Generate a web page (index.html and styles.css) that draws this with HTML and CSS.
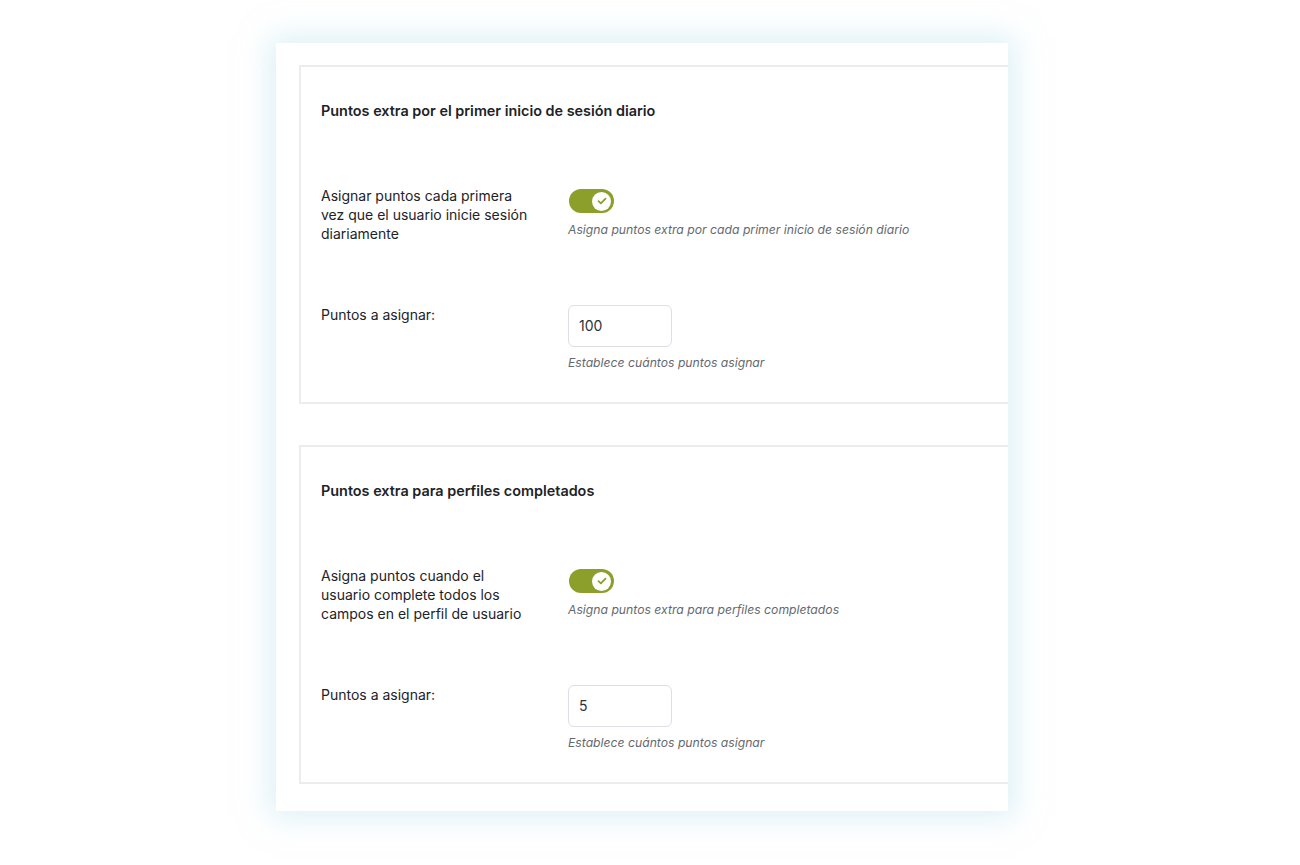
FILE: index.html
```html
<!DOCTYPE html>
<html lang="es">
<head>
<meta charset="utf-8">
<title>Puntos extra</title>
<link rel="stylesheet" href="styles.css">
</head>
<body>
<div class="stage">
  <div class="card">
    <section class="panel">
      <h2 class="panel-title">Puntos extra por el primer inicio de sesión diario</h2>
      <div class="row row-toggle">
        <div class="label">Asignar puntos cada primera vez que el usuario inicie sesión diariamente</div>
        <div class="field">
          <span class="toggle">
            <span class="knob">
              <svg width="10" height="8" viewBox="0 0 10 8"><path d="M1.5 4.2 L3.9 6.4 L8.5 1.6" fill="none" stroke="#8c9f2b" stroke-width="1.8" stroke-linecap="round" stroke-linejoin="round"/></svg>
            </span>
          </span>
          <p class="desc">Asigna puntos extra por cada primer inicio de sesión diario</p>
        </div>
      </div>
      <div class="row row-input">
        <div class="label">Puntos a asignar:</div>
        <div class="field">
          <div class="input">100</div>
          <p class="desc">Establece cuántos puntos asignar</p>
        </div>
      </div>
    </section>
    <section class="panel">
      <h2 class="panel-title">Puntos extra para perfiles completados</h2>
      <div class="row row-toggle">
        <div class="label">Asigna puntos cuando el usuario complete todos los campos en el perfil de usuario</div>
        <div class="field">
          <span class="toggle">
            <span class="knob">
              <svg width="10" height="8" viewBox="0 0 10 8"><path d="M1.5 4.2 L3.9 6.4 L8.5 1.6" fill="none" stroke="#8c9f2b" stroke-width="1.8" stroke-linecap="round" stroke-linejoin="round"/></svg>
            </span>
          </span>
          <p class="desc">Asigna puntos extra para perfiles completados</p>
        </div>
      </div>
      <div class="row row-input">
        <div class="label">Puntos a asignar:</div>
        <div class="field">
          <div class="input">5</div>
          <p class="desc">Establece cuántos puntos asignar</p>
        </div>
      </div>
    </section>
  </div>
</div>
</body>
</html>
```

FILE: styles.css
```css
* { box-sizing: border-box; }
html, body {
  margin: 0;
  padding: 0;
  background: #ffffff;
  width: 1300px;
  height: 865px;
  overflow: hidden;
}
body {
  font-family: Inter, "Noto Sans", "Liberation Sans", sans-serif;
  color: #1d2327;
}
.stage {
  padding-top: 43px;
  padding-left: 276px;
}
.card {
  width: 732px;
  height: 768px;
  background: #ffffff;
  box-shadow: 0 0 28px 6px rgba(190, 228, 240, 0.55);
  padding: 22px 0 0 23px;
  overflow: hidden;
}
.panel {
  width: 760px;
  height: 339px;
  border: 2px solid #ececec;
  border-right: none;
  padding: 34px 0 0 20px;
  margin-bottom: 41px;
}
.panel-title {
  margin: 0;
  font-size: 14.4px;
  line-height: 20px;
  font-weight: 600;
  color: #1d2327;
}
.row {
  display: flex;
  gap: 38px;
}
.row-toggle { margin-top: 65px; }
.row-input { margin-top: 62px; }
.label {
  width: 209px;
  font-size: 14px;
  line-height: 19px;
  color: #1d2327;
}
.field {
  display: flex;
  flex-direction: column;
  align-items: flex-start;
}
.toggle {
  display: flex;
  align-items: center;
  justify-content: flex-end;
  width: 45px;
  height: 24px;
  margin-top: 3px;
  margin-left: 1px;
  border-radius: 12px;
  background: #8c9f2b;
  padding-right: 3px;
}
.knob {
  width: 19px;
  height: 19px;
  border-radius: 50%;
  background: #ffffff;
  display: flex;
  align-items: center;
  justify-content: center;
}
.desc {
  margin: 0;
  font-size: 12.2px;
  line-height: 16px;
  font-style: italic;
  color: #646970;
}
.row-toggle .desc { margin-top: 9px; }
.input {
  width: 104px;
  height: 42px;
  border: 1px solid #dcdfe3;
  border-radius: 6px;
  padding: 0 10px;
  font-size: 14px;
  line-height: 40px;
  color: #2c3338;
}
.row-input .desc { margin-top: 8px; }
```
